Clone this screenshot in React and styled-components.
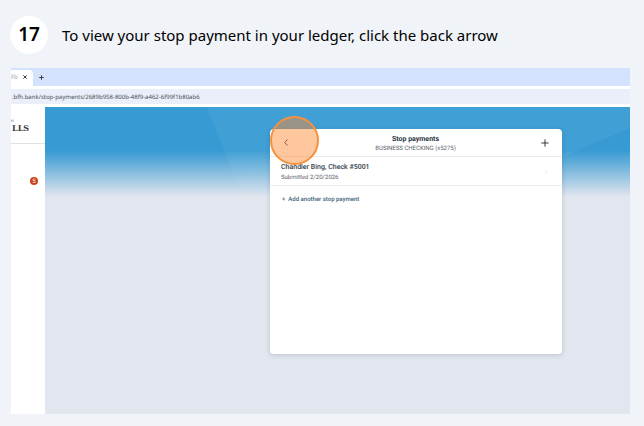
import React from 'react';
import styled, { createGlobalStyle } from 'styled-components';

const GlobalStyle = createGlobalStyle`
    * {
        box-sizing: border-box;
    }
    body {
        margin: 0;
        background-color: #f0f3f8;
        font-family: 'Noto Sans', sans-serif;
    }
    button, input {
        text-rendering: inherit;
    }
    button {
        padding: 0;
        border: none;
        background: none;
        font-family: inherit;
        cursor: pointer;
    }
    svg {
        display: block;
    }
`
const Page = styled.main`
    display: flex;
    flex-direction: column;
    min-height: 100vh;
    padding: 16px 14px 12px 11px;
`
const StepHeader = styled.header`
    display: flex;
    align-items: center;
    gap: 14px;
    margin: 0 0 14px -1px;
`
const StepNumber = styled.span`
    display: flex;
    align-items: center;
    justify-content: center;
    flex: none;
    width: 38px;
    height: 38px;
    padding-bottom: 2px;
    border-radius: 50%;
    background-color: #fff;
    font-size: 19px;
    font-weight: 600;
    line-height: 24px;
    color: #000;
`
const StepTitle = styled.h1`
    margin: 0;
    font-size: 15px;
    font-weight: 400;
    line-height: 24px;
    color: #000;
`
const Browser = styled.section`
    display: flex;
    flex-direction: column;
    flex: 1;
    overflow: hidden;
    background-color: #fff;
    text-rendering: geometricPrecision;
`
const TabBar = styled.div`
    display: flex;
    align-items: flex-end;
    height: 18px;
    background-color: #d3e2fd;
`
const Tab = styled.div`
    display: flex;
    align-items: center;
    justify-content: space-between;
    width: 22px;
    height: 16px;
    padding: 0 5px 2px 0;
    border-top-right-radius: 4px;
    background-color: #fff;
    font-size: 6px;
    line-height: 8px;
    color: #a0a3a8;
`
const TabButton = styled.button`
    display: flex;
    align-items: center;
    justify-content: center;
    width: ${props => props.$wide ? '16px' : '6px'};
    height: ${props => props.$wide ? '18px' : '14px'};
    color: #3c4043;
`
const AddressBar = styled.div`
    display: flex;
    align-items: center;
    height: 21px;
    border: solid #fff;
    border-width: 3px 0;
    background-color: #ebeff9;
`
const Address = styled.input`
    flex: 1;
    min-width: 0;
    height: 15px;
    padding: 0 0 0 1px;
    border: none;
    outline: none;
    background: none;
    font-family: 'Noto Sans', sans-serif;
    font-size: 6px;
    color: #45494f;
`
const Site = styled.div`
    display: flex;
    flex: 1;
    font-family: Roboto, sans-serif;
`
const Sidebar = styled.aside`
    display: flex;
    flex-direction: column;
    flex: none;
    width: 34px;
    background-color: #fff;
`
const Brand = styled.div`
    height: 37px;
    padding: 11px 15px 0 0;
    border-bottom: 1px solid #dde2e6;
    font-family: 'DejaVu Serif', serif;
    color: #33363b;
`
const BrandTop = styled.div`
    font-size: 5px;
    line-height: 6px;
    color: #777b80;
`
const BrandName = styled.div`
    padding-left: 1px;
    font-size: 8px;
    font-weight: 700;
    line-height: 9px;
`
const Count = styled.span`
    align-self: flex-end;
    width: 8px;
    height: 8px;
    margin: 33px 7px 0 0;
    border-radius: 50%;
    background-color: #c9441c;
    font-size: 6px;
    line-height: 9px;
    text-align: center;
    color: #fff;
`
const Content = styled.div`
    position: relative;
    display: grid;
    grid-template-columns: 225fr 292fr 68fr;
    flex: 1;
    padding: 22px 0 60px;
    background-color: #e2e6ee;
`
const Banner = styled.div`
    position: absolute;
    top: 0;
    left: 0;
    right: 0;
    height: 90px;

    svg {
        width: 100%;
        height: 100%;
    }
`
const Card = styled.section`
    position: relative;
    grid-column: 2;
    border-radius: 4px;
    background-color: #fff;
    box-shadow: 0 1px 5px rgba(40, 60, 80, 0.2);
`
const CardHeader = styled.header`
    display: flex;
    align-items: center;
    justify-content: space-between;
    height: 28px;
    padding: 0 12px 0 11px;
    border-bottom: 1px solid #e8eaec;
`
const Heading = styled.div`
    padding-top: 3px;
    text-align: center;
`
const CardTitle = styled.h2`
    margin: 0;
    font-size: 7px;
    font-weight: 700;
    line-height: 9px;
    color: #2b3440;
`
const Account = styled.p`
    margin: 0;
    font-size: 6px;
    line-height: 10px;
    color: #5c646d;
`
const IconButton = styled.button`
    display: flex;
    align-items: center;
    justify-content: center;
    position: relative;
    width: 10px;
    height: 10px;
    color: #2b3440;
`
const ClickMarker = styled.span`
    position: absolute;
    top: 50%;
    left: 50%;
    width: 49px;
    height: 49px;
    margin: -27px 0 0 -16px;
    border: 2px solid #f5923d;
    border-radius: 50%;
    background-color: rgba(255, 135, 48, 0.47);
    pointer-events: none;
`
const Payment = styled.a`
    display: flex;
    align-items: center;
    justify-content: space-between;
    height: 29px;
    padding: 0 14px 0 11px;
    border-bottom: 1px solid #eceef0;
    text-decoration: none;
    color: #d5d8dc;
`
const PaymentInfo = styled.div`
    padding-top: 3px;
`
const PaymentName = styled.div`
    font-size: 7px;
    font-weight: 500;
    line-height: 10px;
    color: #333d48;
`
const PaymentDate = styled.div`
    font-size: 6px;
    line-height: 12px;
    color: #5c646d;
`
const AddButton = styled.button`
    display: flex;
    align-items: center;
    gap: 3px;
    margin: 9px 0 0 12px;
    font-size: 6px;
    font-weight: 500;
    line-height: 10px;
    color: #3b6075;
`

const Plus = ({ size, weight = 1 }) => (
    <svg width={size} height={size} viewBox="0 0 10 10" fill="none" stroke="currentColor" strokeWidth={weight}>
        <path d="M5 0.5v9M0.5 5h9" />
    </svg>
)

function BannerArt() {
    return (
        <Banner>
            <svg viewBox="0 0 585 90" preserveAspectRatio="none" aria-hidden="true">
                <defs>
                    <linearGradient id="fade" x1="0" y1="0" x2="0" y2="1">
                        <stop offset="0.48" stopColor="#e2e6ee" stopOpacity="0" />
                        <stop offset="0.62" stopColor="#e2e6ee" stopOpacity="0.25" />
                        <stop offset="1" stopColor="#e2e6ee" />
                    </linearGradient>
                </defs>
                <rect width="585" height="90" fill="#379ad3" />
                <path d="M162 0L197 90H436L527 46L585 21V0z" fill="#409fd5" />
                <rect width="585" height="90" fill="url(#fade)" />
            </svg>
        </Banner>
    )
}

function StopPayments() {
    return (
        <Card>
            <CardHeader>
                <IconButton aria-label="Back">
                    <svg width="4" height="7" viewBox="0 0 4 7" fill="none" stroke="currentColor">
                        <path d="M3.5 0.5L0.7 3.5L3.5 6.5" />
                    </svg>
                    <ClickMarker />
                </IconButton>
                <Heading>
                    <CardTitle>Stop payments</CardTitle>
                    <Account>BUSINESS CHECKING (x5275)</Account>
                </Heading>
                <IconButton aria-label="Add">
                    <Plus size={8} weight={1.2} />
                </IconButton>
            </CardHeader>
            <Payment href="#payment">
                <PaymentInfo>
                    <PaymentName>Chandler Bing, Check #5001</PaymentName>
                    <PaymentDate>Submitted 2/20/2026</PaymentDate>
                </PaymentInfo>
                <svg width="4" height="5" viewBox="0 0 4 5" fill="none" stroke="currentColor" strokeWidth="0.6">
                    <path d="M1 0.5L3 2.5L1 4.5" />
                </svg>
            </Payment>
            <AddButton>
                <span>+</span>
                Add another stop payment
            </AddButton>
        </Card>
    )
}

function App() {
    return (
        <>
            <GlobalStyle />
            <Page>
                <StepHeader>
                    <StepNumber>17</StepNumber>
                    <StepTitle>To view your stop payment in your ledger, click the back arrow</StepTitle>
                </StepHeader>
                <Browser>
                    <TabBar>
                        <Tab>
                            Fb
                            <TabButton aria-label="Close tab">
                                <svg width="4" height="4" viewBox="0 0 4 4" stroke="currentColor">
                                    <path d="M0.3 0.3L3.7 3.7M3.7 0.3L0.3 3.7" />
                                </svg>
                            </TabButton>
                        </Tab>
                        <TabButton $wide aria-label="New tab">
                            <Plus size={5} weight={2} />
                        </TabButton>
                    </TabBar>
                    <AddressBar>
                        <Address
                            type="text"
                            aria-label="Address"
                            defaultValue=".bfh.bank/stop-payments/2689b958-800b-48f9-a462-6f99f1b80ab6"
                        />
                    </AddressBar>
                    <Site>
                        <Sidebar>
                            <Brand>
                                <BrandTop>e</BrandTop>
                                <BrandName>LLS</BrandName>
                            </Brand>
                            <Count>5</Count>
                        </Sidebar>
                        <Content>
                            <BannerArt />
                            <StopPayments />
                        </Content>
                    </Site>
                </Browser>
            </Page>
        </>
    )
}

export default App
